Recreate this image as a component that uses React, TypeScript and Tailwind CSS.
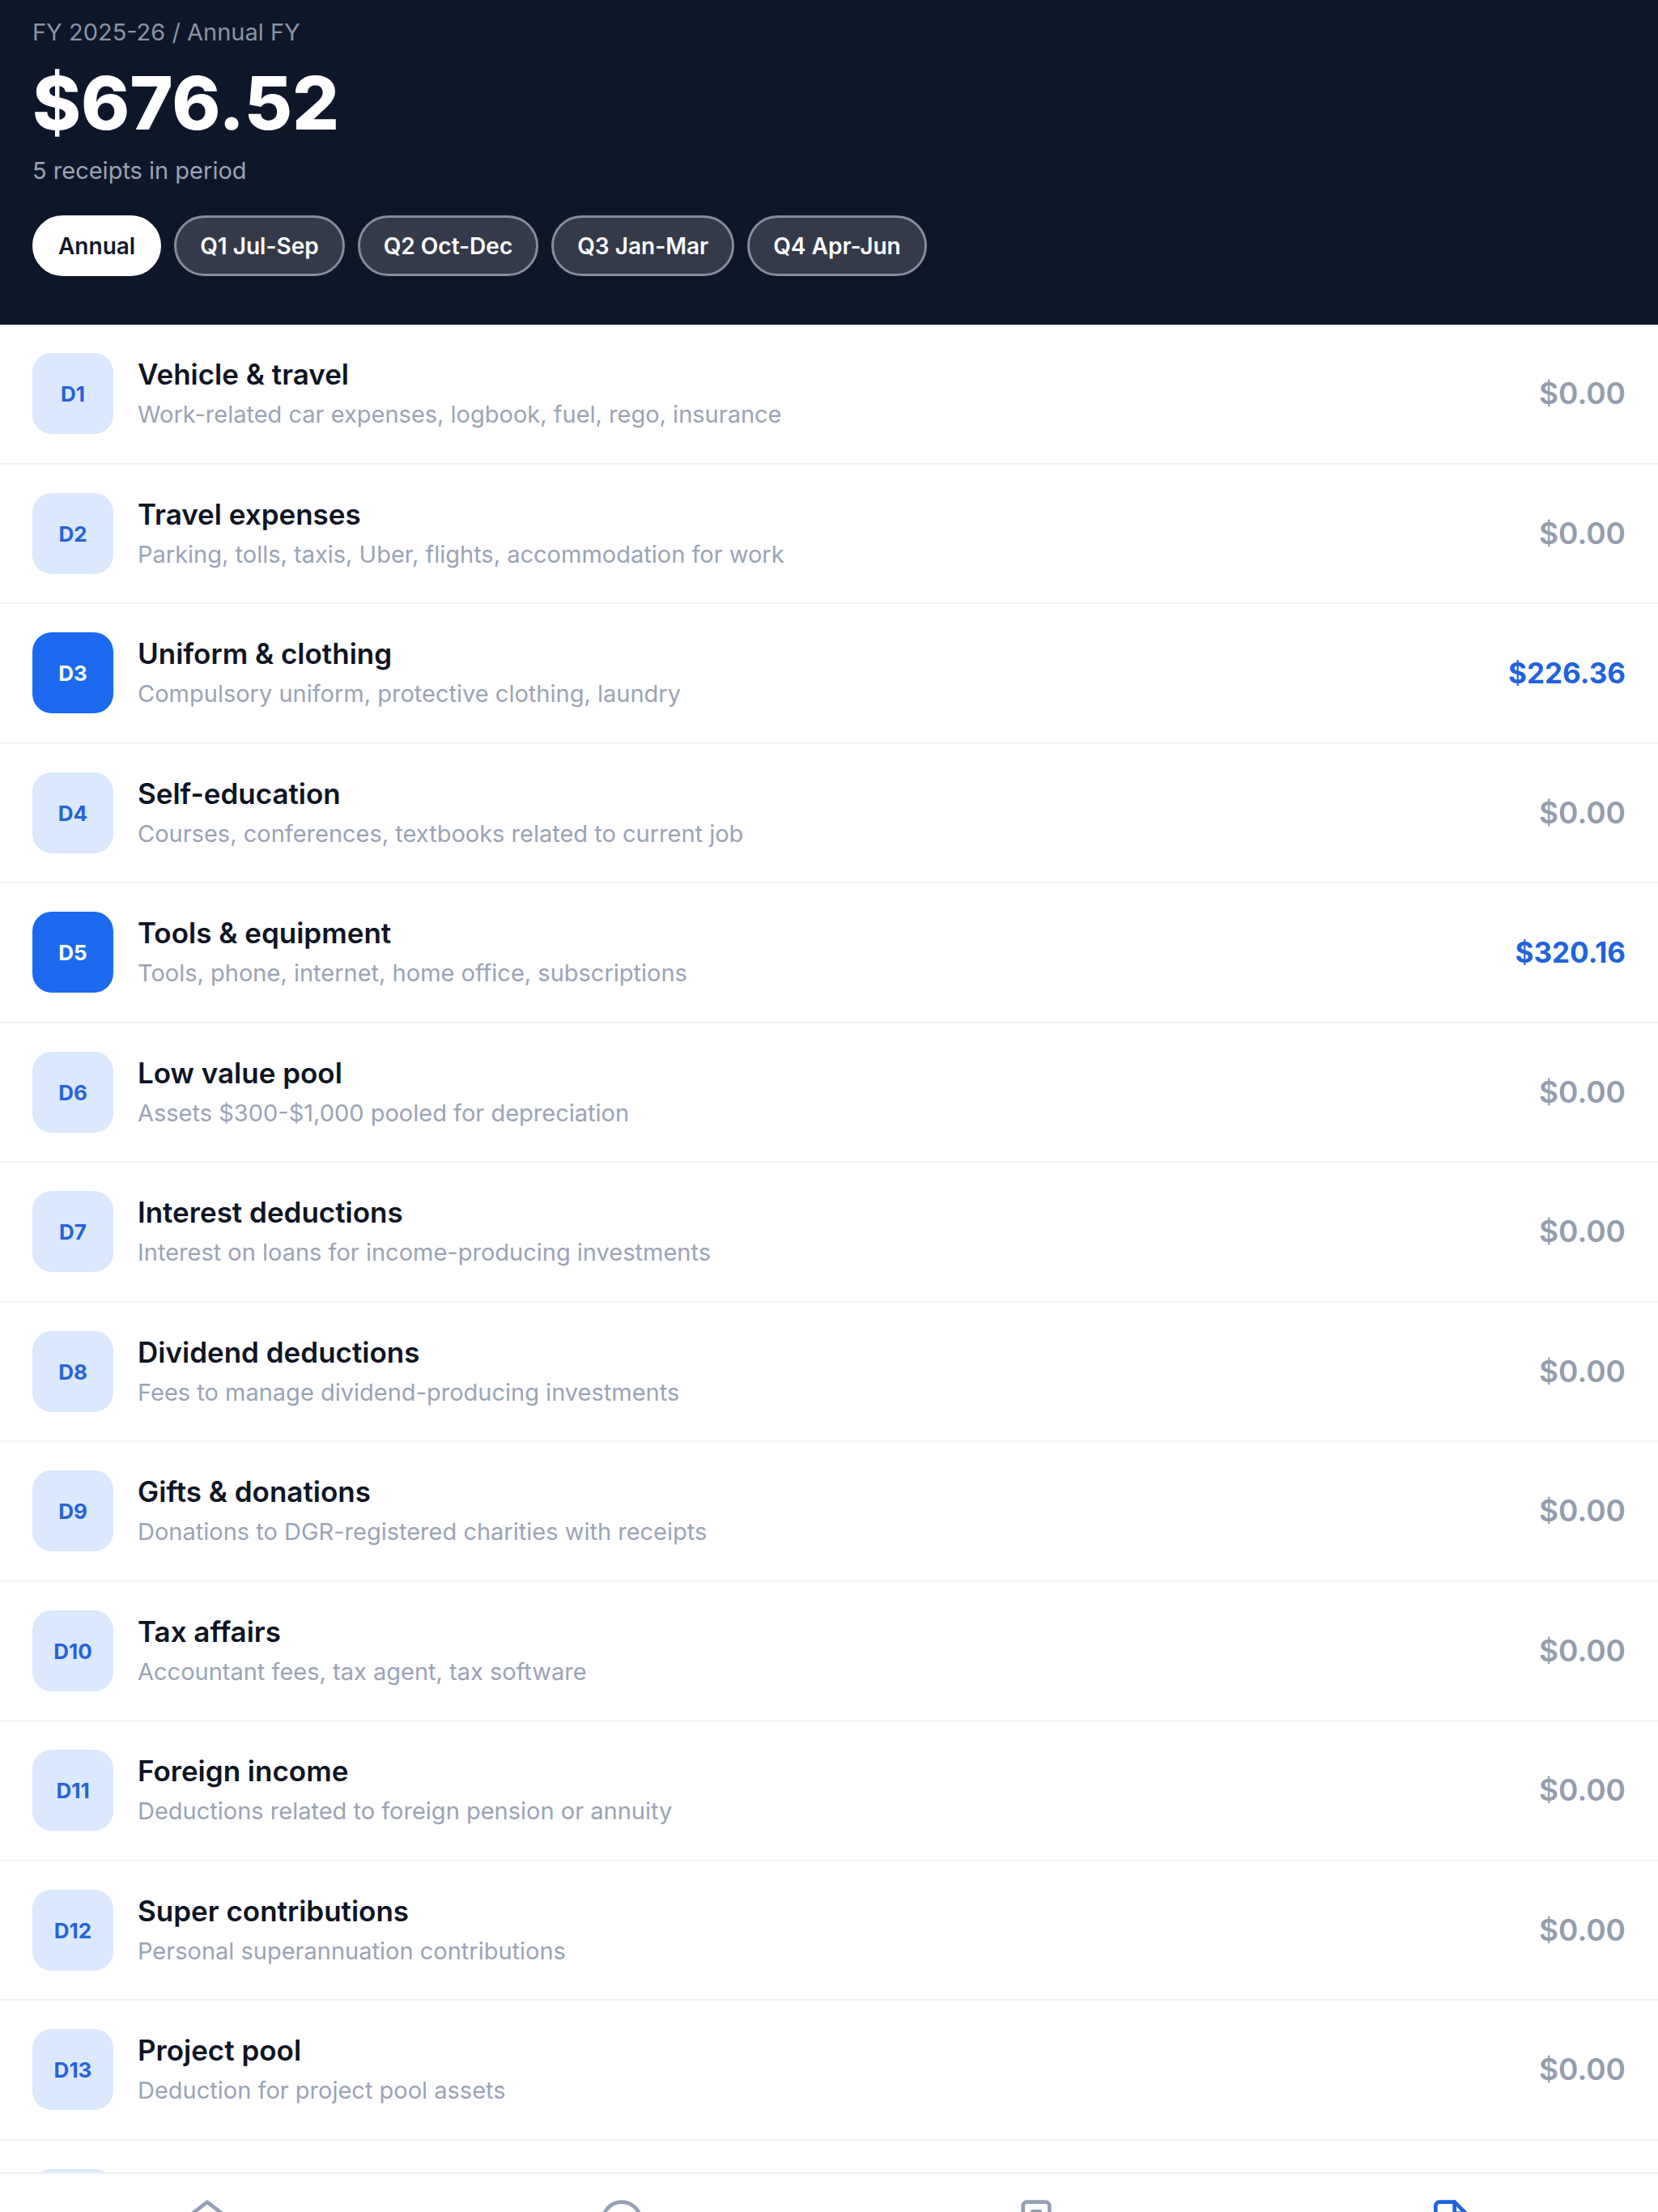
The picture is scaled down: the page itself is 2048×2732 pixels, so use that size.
import { clsx } from "clsx";

type Deduction = { code: string; title: string; note: string; amount: number };

const periods = ["Annual", "Q1 Jul-Sep", "Q2 Oct-Dec", "Q3 Jan-Mar", "Q4 Apr-Jun"];

const deductions: Deduction[] = [
  { code: "D1", title: "Vehicle & travel", note: "Work-related car expenses, logbook, fuel, rego, insurance", amount: 0 },
  { code: "D2", title: "Travel expenses", note: "Parking, tolls, taxis, Uber, flights, accommodation for work", amount: 0 },
  { code: "D3", title: "Uniform & clothing", note: "Compulsory uniform, protective clothing, laundry", amount: 226.36 },
  { code: "D4", title: "Self-education", note: "Courses, conferences, textbooks related to current job", amount: 0 },
  { code: "D5", title: "Tools & equipment", note: "Tools, phone, internet, home office, subscriptions", amount: 320.16 },
  { code: "D6", title: "Low value pool", note: "Assets $300-$1,000 pooled for depreciation", amount: 0 },
  { code: "D7", title: "Interest deductions", note: "Interest on loans for income-producing investments", amount: 0 },
  { code: "D8", title: "Dividend deductions", note: "Fees to manage dividend-producing investments", amount: 0 },
  { code: "D9", title: "Gifts & donations", note: "Donations to DGR-registered charities with receipts", amount: 0 },
  { code: "D10", title: "Tax affairs", note: "Accountant fees, tax agent, tax software", amount: 0 },
  { code: "D11", title: "Foreign income", note: "Deductions related to foreign pension or annuity", amount: 0 },
  { code: "D12", title: "Super contributions", note: "Personal superannuation contributions", amount: 0 },
  { code: "D13", title: "Project pool", note: "Deduction for project pool assets", amount: 0 },
];

function Header() {
  return (
    <header className="shrink-0 bg-[#0e172a] px-10 pt-5 pb-15">
      <p className="text-[29px] leading-10 text-[#8b93a5]">FY 2025-26 / Annual FY</p>
      <h1 className="mt-[11px] text-[91px] leading-28 font-extrabold text-white">$676.52</h1>
      <p className="mt-2 text-[29px] leading-10 text-[#9ca3b3]">5 receipts in period</p>
      <div className="mt-[35px] flex gap-4">
        {periods.map((period, i) => (
          <button
            key={period}
            type="button"
            className={clsx(
              "h-[75px] rounded-full border-3 px-[29px] text-[28px] font-semibold",
              i === 0 ? "border-white bg-white text-[#0e172a]" : "border-[#868c9a] bg-[#343a4a] text-white"
            )}
          >
            {period}
          </button>
        ))}
      </div>
    </header>
  );
}

function Badge({ code, used }: { code?: string; used?: boolean }) {
  return (
    <div
      className={clsx(
        "flex size-[100px] shrink-0 items-center justify-center rounded-3xl text-[26px] font-bold",
        used ? "bg-[#1b6af0] text-white" : "bg-[#dbe8fd] text-[#2563d9]"
      )}
    >
      {code}
    </div>
  );
}

function Row({ item }: { item: Deduction }) {
  const used = item.amount > 0;
  return (
    <li className="flex items-center gap-[30px] border-b-2 border-[#f3f4f6] px-10 pt-[35px] pb-9 even:pb-[35px]">
      <Badge code={item.code} used={used} />
      <div className="min-w-0 grow">
        <h2 className="text-[35px] leading-12 font-semibold text-[#0e1423]">{item.title}</h2>
        <p className="mt-1 text-[29px] leading-11 text-[#9aa3b5]">{item.note}</p>
      </div>
      <span
        className={clsx(used ? "text-[35px] font-bold text-[#2063dc]" : "text-[37px] font-semibold text-[#949dad]")}
      >
        ${item.amount.toFixed(2)}
      </span>
    </li>
  );
}

function TabIcon({ children }: { children: any }) {
  return (
    <svg
      viewBox="0 0 24 24"
      className="size-14"
      fill="none"
      stroke="currentColor"
      strokeWidth="2"
      strokeLinecap="round"
      strokeLinejoin="round"
    >
      {children}
    </svg>
  );
}

function TabBar() {
  return (
    <nav className="h-[49px] shrink-0 overflow-hidden border-t-2 border-[#f0f1f4] bg-white text-[#94a0b4]">
      <div className="grid grid-cols-4 justify-items-center pt-[30px]">
        <a href="#home" aria-label="Home">
          <TabIcon>
            <path d="m3 9 9-7 9 7v11a2 2 0 0 1-2 2H5a2 2 0 0 1-2-2z" />
          </TabIcon>
        </a>
        <a href="#activity" aria-label="Activity">
          <TabIcon>
            <circle cx="12" cy="12" r="10" />
          </TabIcon>
        </a>
        <a href="#receipts" aria-label="Receipts">
          <TabIcon>
            <rect x="5" y="2" width="14" height="20" rx="2" />
            <path d="M10 7h4" />
          </TabIcon>
        </a>
        <a href="#tax" aria-label="Tax" className="text-[#1d62dd]">
          <TabIcon>
            <path d="M14 2H6a2 2 0 0 0-2 2v16a2 2 0 0 0 2 2h12a2 2 0 0 0 2-2V8z" />
            <path d="M14 2v6h6" />
          </TabIcon>
        </a>
      </div>
    </nav>
  );
}

export default function App() {
  return (
    <div className="flex h-screen flex-col bg-white font-['Inter',sans-serif]">
      <Header />
      <ul className="min-h-0 grow overflow-hidden">
        {deductions.map(item => (
          <Row key={item.code} item={item} />
        ))}
        {/* next row, still scrolled under the tab bar */}
        <li className="px-10 pt-[35px]">
          <Badge />
        </li>
      </ul>
      <TabBar />
    </div>
  );
}
